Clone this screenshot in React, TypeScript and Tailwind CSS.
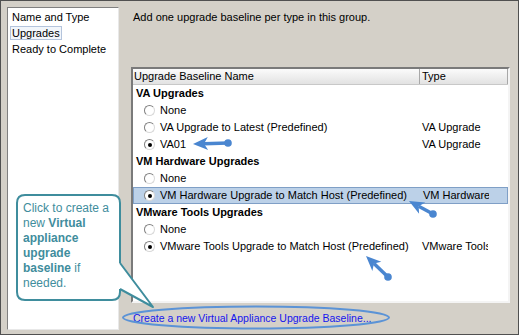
import React from 'react'

type Row =
  | { kind: 'group'; label: string }
  | { kind: 'item'; label: string; type?: string; checked?: boolean; selected?: boolean }

const rows: Row[] = [
  { kind: 'group', label: 'VA Upgrades' },
  { kind: 'item', label: 'None' },
  { kind: 'item', label: 'VA Upgrade to Latest (Predefined)', type: 'VA Upgrade' },
  { kind: 'item', label: 'VA01', type: 'VA Upgrade', checked: true },
  { kind: 'group', label: 'VM Hardware Upgrades' },
  { kind: 'item', label: 'None' },
  { kind: 'item', label: 'VM Hardware Upgrade to Match Host (Predefined)', type: 'VM Hardware', checked: true, selected: true },
  { kind: 'group', label: 'VMware Tools Upgrades' },
  { kind: 'item', label: 'None' },
  { kind: 'item', label: 'VMware Tools Upgrade to Match Host (Predefined)', type: 'VMware Tools', checked: true },
]

function Radio({ checked }: { checked?: boolean }) {
  return (
    <span className="w-[11px] h-[11px] rounded-full border border-t-[#808080] border-l-[#808080] border-r-[#d8d8d8] border-b-[#d8d8d8] bg-white flex items-center justify-center shrink-0">
      {checked && <span className="w-[4px] h-[4px] rounded-full bg-black" />}
    </span>
  )
}

// blue annotation arrow: tip + tail dot
function Arrow({ x1, y1, x2, y2 }: { x1: number; y1: number; x2: number; y2: number }) {
  const dx = x2 - x1
  const dy = y2 - y1
  const len = Math.hypot(dx, dy)
  const ux = dx / len
  const uy = dy / len
  const px = -uy
  const py = ux
  const hl = 15
  const hw = 6.5
  const bx = x1 + ux * hl
  const by = y1 + uy * hl
  const nx = x1 + ux * (hl - 4)
  const ny = y1 + uy * (hl - 4)
  const head = `M${x1},${y1} L${bx + px * hw},${by + py * hw} L${nx},${ny} L${bx - px * hw},${by - py * hw} Z`
  return (
    <g>
      <line x1={nx} y1={ny} x2={x2} y2={y2} stroke="#4a86d0" strokeWidth={3.5} />
      <path d={head} fill="#4a86d0" />
      <circle cx={x2} cy={y2} r={3.8} fill="#4a86d0" />
    </g>
  )
}

export default function App() {
  return (
    <div className="relative w-[519px] h-[335px] bg-[#d4d0c8] border border-[#505050] overflow-hidden font-['Liberation_Sans',Arial,sans-serif] text-[11px] text-black">
      <div className="flex pl-[6px] pt-[6px]">
        {/* steps list */}
        <div className="w-[112px] h-[323px] bg-white border border-t-[#808080] border-l-[#808080] border-r-[#e8e8e8] border-b-[#e8e8e8] pt-[1px] pl-[2px] flex flex-col">
          <div className="h-[16px] leading-[16px] px-[2px]">Name and Type</div>
          <div className="h-[14px] leading-[12px] px-[1px] mt-[1px] self-start bg-[#f2f6fb] border border-[#b4c4dc]">Upgrades</div>
          <div className="h-[16px] leading-[16px] px-[2px] mt-[1px]">Ready to Complete</div>
        </div>

        {/* right side */}
        <div className="ml-[12px] flex flex-col">
          <div className="h-[13px] leading-[13px] mt-[4px] ml-[2px]">Add one upgrade baseline per type in this group.</div>

          <div className="mt-[43px] w-[379px] h-[236px] bg-white border-2 border-t-[#7a7a7a] border-l-[#7a7a7a] border-r-[#f4f4f4] border-b-[#f4f4f4]">
            <div className="flex h-[16px] bg-gradient-to-b from-[#fbfbfb] to-[#e2e2e2] border-b border-[#c8c8c8] leading-[15px]">
              <div className="w-[287px] pl-[1px] border-r border-[#a8a8a8]">Upgrade Baseline Name</div>
              <div className="flex-1 pl-[2px] border-r border-[#a8a8a8]">Type</div>
            </div>
            {rows.map((r, i) =>
              r.kind === 'group' ? (
                <div key={i} className="h-[17px] flex items-center pl-[3px] font-bold">
                  {r.label}
                </div>
              ) : (
                <div
                  key={i}
                  className={`h-[17px] flex items-center ${r.selected ? 'bg-[#bcd1e8] border border-[#7f9fc6]' : ''}`}
                >
                  <div className={`w-[287px] flex items-center gap-[5px] ${r.selected ? 'pl-[10px]' : 'pl-[11px]'}`}>
                    <Radio checked={r.checked} />
                    <span className="whitespace-nowrap">{r.label}</span>
                  </div>
                  <div className="pl-[2px] w-[68px] overflow-hidden whitespace-nowrap">{r.type}</div>
                </div>
              )
            )}
          </div>

          <div className="mt-[8px] ml-[2px] h-[14px] leading-[14px] text-[10.5px] text-[#1515ee] whitespace-nowrap">
            Create a new Virtual Appliance Upgrade Baseline...
          </div>
        </div>
      </div>

      {/* annotations */}
      <svg className="absolute left-0 top-0 pointer-events-none" width={519} height={335}>
        <path d="M24,194 L111,194 Q119,194 119,202 L119,262 L152,306 L119,288 L119,291 Q119,299 111,299 L24,299 Q16,299 16,291 L16,202 Q16,194 24,194 Z" fill="white" stroke="none" />
        <path d="M119,262 L119,202 Q119,194 111,194 L24,194 Q16,194 16,202 L16,291 Q16,299 24,299 L111,299 Q119,299 119,291 L119,288" fill="none" stroke="#3f8d9d" strokeWidth={2} />
        <path d="M119,262 L152,306 L119,288" fill="none" stroke="#3f8d9d" strokeWidth={2} strokeLinejoin="round" />
        <ellipse cx={255} cy={316.5} rx={133} ry={11} fill="none" stroke="#5b93d6" strokeWidth={2} />
        <Arrow x1={192} y1={143} x2={227} y2={142} />
        <Arrow x1={408} y1={200} x2={432} y2={213} />
        <Arrow x1={365} y1={255} x2={387} y2={276} />
      </svg>

      <div className="absolute left-[22px] top-[200px] w-[96px] text-[12px] leading-[15px] text-[#3f8d9d]">
        <div>Click to create a</div>
        <div>new <b>Virtual</b></div>
        <div><b>appliance</b></div>
        <div><b>upgrade</b></div>
        <div><b>baseline</b> if</div>
        <div>needed.</div>
      </div>
    </div>
  )
}
